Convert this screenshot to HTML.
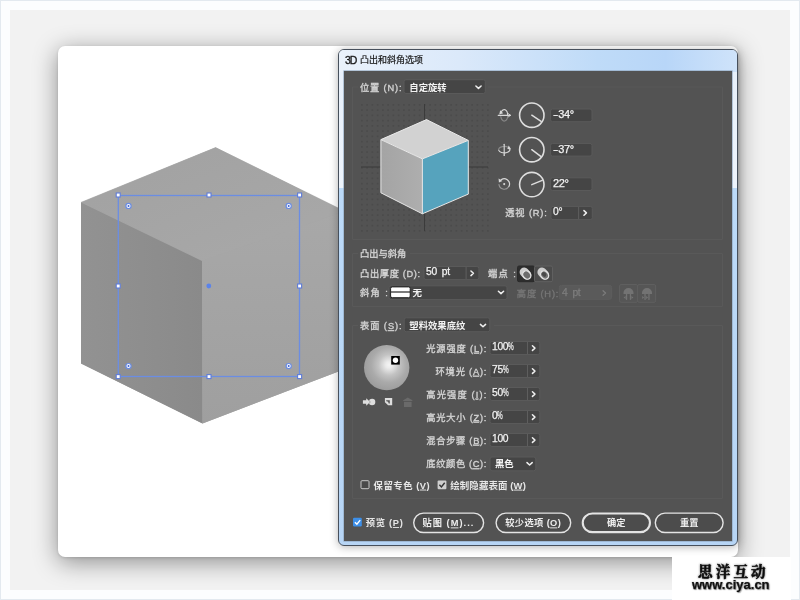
<!DOCTYPE html>
<html><head><meta charset="utf-8"><title>3D 凸出和斜角选项</title>
<style>
html,body{margin:0;padding:0}
body{width:800px;height:600px;position:relative;overflow:hidden;background:#f2f2f2;font-family:"Liberation Sans",sans-serif}
.b{position:absolute}
.t{position:absolute;color:transparent;white-space:nowrap;line-height:1.2;overflow:hidden;height:1.2em;font-family:"Liberation Sans",sans-serif}
.v i{display:inline-block;font-style:normal;transform:scaleX(.62);transform-origin:0 50%;letter-spacing:0}
.v b{font-weight:normal;display:inline-block;transform:scaleX(1.45);transform-origin:0 50%;margin-right:2px}
.v{-webkit-text-stroke:.25px;will-change:transform;position:absolute;white-space:nowrap;line-height:1;font-family:"Liberation Sans",sans-serif}
svg{position:absolute;left:0;top:0}
#frame{position:absolute;left:0;top:0;width:780px;height:580px;border:10px solid #fcfdfe;box-shadow:inset 0 0 0 0 #000}
#edge{position:absolute;left:0;top:0;width:798px;height:598px;border:1px solid #e3e9ef}
#card{position:absolute;left:58px;top:46px;width:680px;height:510.5px;background:#fff;border-radius:7px;box-shadow:0 5px 24px rgba(0,0,0,.42),0 1px 3px rgba(0,0,0,.12)}
#dlg{position:absolute;left:338px;top:48.5px;width:398px;height:495px;border:1px solid #47505c;border-radius:6px;background:linear-gradient(180deg,#e6effa 0,#eef4fc 137.5px,#bcdaf8 138.5px,#b7d5f5 100%);box-shadow:0 1px 8px rgba(0,0,0,.3)}
#tbar{position:absolute;left:0;top:0;width:398px;height:22px;border-radius:5px 5px 0 0;background:linear-gradient(90deg,#eaf2fb 0%,#dbe9fa 30%,#bfdbf8 65%,#b8d6f8 82%,#cfe3fa 100%)}
#panel{position:absolute;left:5.3px;top:21.6px;width:388px;height:469.6px;background:#535353;box-shadow:0 0 0 .6px #8fa6bf}
#wm{position:absolute;left:672px;top:557px;width:119px;height:43px;background:#fff}
.lbl text{font-family:"Liberation Sans","Noto Sans CJK SC",sans-serif}
</style></head><body>
<div id="frame"></div><div id="edge"></div>
<div id="card"></div>
<svg width="800" height="600" viewBox="0 0 800 600">
<defs>
<linearGradient id="bt" x1="0" y1="0" x2="1" y2="1"><stop offset="0" stop-color="#a1a1a1"/><stop offset="1" stop-color="#a9a9a9"/></linearGradient>
<linearGradient id="bl" x1="0" y1="0" x2="1" y2="0"><stop offset="0" stop-color="#929292"/><stop offset="1" stop-color="#8a8a8a"/></linearGradient>
<linearGradient id="br" x1="0" y1="0" x2="0" y2="1"><stop offset="0" stop-color="#a8a8a8"/><stop offset="1" stop-color="#9f9f9f"/></linearGradient>
</defs>
<polygon points="215.60,147.60 81.00,202.40 81.00,363.60 202.50,423.60 345.00,368.90 345.00,211.40" fill="#a5a5a5" />
<polygon points="215.60,147.60 81.00,202.40 202.00,261.00 345.00,211.40" fill="url(#bt)" stroke="#a6a6a6" stroke-width=".6"/>
<polygon points="81.00,202.40 202.00,261.00 202.50,423.60 81.00,363.60" fill="url(#bl)" />
<polygon points="202.00,261.00 345.00,211.40 345.00,368.90 202.50,423.60" fill="url(#br)" />
<rect x="118.3" y="195.5" width="181.2" height="181" fill="none" stroke="#6b8de3" stroke-width="1.3"/>
<rect x="116.2" y="193.0" width="4" height="4" fill="#fff" stroke="#5f7cd8" stroke-width="1.1"/>
<rect x="116.2" y="284.0" width="4" height="4" fill="#fff" stroke="#5f7cd8" stroke-width="1.1"/>
<rect x="116.2" y="374.6" width="4" height="4" fill="#fff" stroke="#5f7cd8" stroke-width="1.1"/>
<rect x="207.0" y="193.0" width="4" height="4" fill="#fff" stroke="#5f7cd8" stroke-width="1.1"/>
<circle cx="208.8" cy="286" r="2.4" fill="#5b83ea"/>
<rect x="207.0" y="374.6" width="4" height="4" fill="#fff" stroke="#5f7cd8" stroke-width="1.1"/>
<rect x="297.6" y="193.0" width="4" height="4" fill="#fff" stroke="#5f7cd8" stroke-width="1.1"/>
<rect x="297.6" y="284.0" width="4" height="4" fill="#fff" stroke="#5f7cd8" stroke-width="1.1"/>
<rect x="297.6" y="374.6" width="4" height="4" fill="#fff" stroke="#5f7cd8" stroke-width="1.1"/>
<circle cx="128.5" cy="205.9" r="2.6" fill="#fff" stroke="#6b8de3" stroke-width="1.2"/><circle cx="128.5" cy="205.9" r="1" fill="#3f63d6"/>
<circle cx="288.7" cy="205.9" r="2.6" fill="#fff" stroke="#6b8de3" stroke-width="1.2"/><circle cx="288.7" cy="205.9" r="1" fill="#3f63d6"/>
<circle cx="128.5" cy="366.1" r="2.6" fill="#fff" stroke="#6b8de3" stroke-width="1.2"/><circle cx="128.5" cy="366.1" r="1" fill="#3f63d6"/>
<circle cx="288.7" cy="366.1" r="2.6" fill="#fff" stroke="#6b8de3" stroke-width="1.2"/><circle cx="288.7" cy="366.1" r="1" fill="#3f63d6"/>
</svg>
<div id="dlg"><div id="tbar"></div><div id="panel"></div></div>
<div id="wm"></div>
<svg width="800" height="600" viewBox="0 0 800 600">
<defs>
<pattern id="dots" x="361" y="104" width="5.25" height="5.25" patternUnits="userSpaceOnUse"><rect x="0" y="0" width="1.7" height="1.7" rx=".5" fill="#4a4a4a"/></pattern>
<linearGradient id="cubeL" x1="0" y1="0" x2="1" y2="0"><stop offset="0" stop-color="#a4a4a4"/><stop offset="1" stop-color="#aeaeae"/></linearGradient>
<radialGradient id="sph" cx="0.55" cy="0.44" r="0.6"><stop offset="0" stop-color="#f4f4f4"/><stop offset=".12" stop-color="#ebebeb"/><stop offset=".38" stop-color="#c3c3c3"/><stop offset=".65" stop-color="#aaaaaa"/><stop offset="1" stop-color="#9a9a9a"/></radialGradient>
</defs>
<path d="M358.0 87.0 H352.5 V239.5 H722.5 V87.0 H488.0" fill="none" stroke="#595959" stroke-width="1"/>
<rect x="404.00" y="79.70" width="81.30" height="13.80" rx="2" fill="#454545" stroke="#5a5a5a" stroke-width="1"/>
<path d="M475.90 86.00 L478.50 88.40 L481.10 86.00" fill="none" stroke="#f0f0f0" stroke-width="1.5" stroke-linecap="round" stroke-linejoin="round"/>
<rect x="359" y="102" width="131" height="131" fill="url(#dots)"/>
<path d="M424.5 104 V231 M361 167 H488" stroke="#3b3b3b" stroke-width="1" fill="none"/>
<polygon points="426.50,119.60 380.90,139.60 422.40,158.90 468.30,140.40" fill="#d2d2d2" />
<polygon points="380.90,139.60 422.40,158.90 422.40,213.80 380.90,192.80" fill="url(#cubeL)" />
<polygon points="422.40,158.90 468.30,140.40 468.30,194.10 422.40,213.80" fill="#56a3bd" />
<path d="M426.50 119.60 L380.90 139.60 L380.90 192.80 L422.40 213.80 L468.30 194.10 L468.30 140.40 Z M380.90 139.60 L422.40 158.90 M422.40 158.90 L468.30 140.40 M422.40 158.90 L422.40 213.80" fill="none" stroke="#e9e9e9" stroke-width="1" stroke-linejoin="round"/>
<g fill="none" stroke="#d8d8d8" stroke-width="1.15" stroke-linecap="round"><path d="M498.2 115.3 H510.2"/><path d="M510.4 115.3 l-1.9 -1.5 M510.4 115.3 l-1.9 1.5" stroke-width="1"/><path d="M501.2 112.4 A3.5 5.8 0 0 1 507.7 115.4"/><path d="M507.7 115.6 A3.5 5.8 0 0 1 500.8 116.6" opacity=".4"/><path d="M499.2 114.6 L503.2 113.3 L500.2 110.3 Z" fill="#d8d8d8" stroke="none"/></g>
<g fill="none" stroke="#d8d8d8" stroke-width="1.15" stroke-linecap="round"><path d="M504.2 144.2 V154.8"/><circle cx="504.2" cy="155.2" r=".8" fill="#d8d8d8" stroke="none"/><path d="M498.8 150.4 A5.6 3.2 0 1 0 509.3 148.3"/><path d="M508.6 147.6 A5.6 3.2 0 0 0 498.7 149.6" opacity=".4"/><path d="M511.1 149.2 L507.3 149.1 L508.7 145.6 Z" fill="#d8d8d8" stroke="none"/></g>
<g fill="none" stroke="#d8d8d8" stroke-width="1.15" stroke-linecap="round"><path d="M500.4 180.3 A5.3 5.3 0 0 1 508.9 186.4"/><path d="M508.6 186.9 A5.3 5.3 0 0 1 499 184.6" opacity=".5"/><path d="M498.6 178.6 L498.9 182.6 L502.4 180.9 Z" fill="#d8d8d8" stroke="none"/><circle cx="504.2" cy="184.1" r="1.05" fill="#d8d8d8" stroke="none"/></g>
<circle cx="531.80" cy="115.20" r="12.2" fill="none" stroke="#dedede" stroke-width="1.6"/>
<path d="M531.80 115.20 L541.09 121.46" stroke="#dedede" stroke-width="1.5" stroke-linecap="round"/>
<circle cx="531.80" cy="149.70" r="12.2" fill="none" stroke="#dedede" stroke-width="1.6"/>
<path d="M531.80 149.70 L540.74 156.44" stroke="#dedede" stroke-width="1.5" stroke-linecap="round"/>
<circle cx="531.80" cy="184.60" r="12.2" fill="none" stroke="#dedede" stroke-width="1.6"/>
<path d="M531.80 184.60 L542.18 180.40" stroke="#dedede" stroke-width="1.5" stroke-linecap="round"/>
<rect x="550.60" y="109.00" width="41.40" height="12.70" rx="2" fill="#454545" stroke="#5a5a5a" stroke-width="1"/>
<rect x="550.60" y="143.40" width="41.40" height="12.70" rx="2" fill="#454545" stroke="#5a5a5a" stroke-width="1"/>
<rect x="550.60" y="177.80" width="41.40" height="12.70" rx="2" fill="#454545" stroke="#5a5a5a" stroke-width="1"/>
<rect x="551.00" y="206.40" width="41.30" height="13.20" rx="2" fill="#454545" stroke="#5a5a5a" stroke-width="1"/>
<path d="M578.60 206.90 V219.10" stroke="#5e5e5e" stroke-width="1"/>
<path d="M583.95 210.60 L586.45 212.90 L583.95 215.20" fill="none" stroke="#f0f0f0" stroke-width="1.5" stroke-linecap="round" stroke-linejoin="round"/>
<path d="M358.0 253.5 H352.5 V306.5 H722.5 V253.5 H410.0" fill="none" stroke="#595959" stroke-width="1"/>
<rect x="424.00" y="266.50" width="54.90" height="13.10" rx="2" fill="#454545" stroke="#5a5a5a" stroke-width="1"/>
<path d="M466.10 267.00 V279.10" stroke="#5e5e5e" stroke-width="1"/>
<path d="M470.95 271.00 L473.45 273.30 L470.95 275.60" fill="none" stroke="#f0f0f0" stroke-width="1.5" stroke-linecap="round" stroke-linejoin="round"/>
<rect x="517.5" y="266" width="17" height="15.7" rx="1.5" fill="#2d2d2d" stroke="#2a2a2a"/>
<rect x="534.5" y="266" width="18" height="15.7" rx="1.5" fill="#4b4b4b" stroke="#606060"/>
<g transform="translate(526.10 274.30)"><path d="M-1.9 -2.1 L0.6 0.6" stroke="#cdcdcd" stroke-width="9.2" stroke-linecap="round"/><ellipse cx="0.7" cy="0.7" rx="3.7" ry="4.5" transform="rotate(-42 0.7 0.7)" fill="#6c6c6c" stroke="#e4e4e4" stroke-width="1.3"/>
</g>
<g transform="translate(543.90 274.30)"><path d="M-1.9 -2.1 L0.6 0.6" stroke="#cdcdcd" stroke-width="9.2" stroke-linecap="round"/><ellipse cx="0.7" cy="0.7" rx="3.7" ry="4.5" transform="rotate(-42 0.7 0.7)" fill="#777" stroke="#e4e4e4" stroke-width="1.3"/>
<ellipse cx="0.2" cy="0.1" rx="2" ry="2.6" transform="rotate(-42 0.2 0.1)" fill="#4a4a4a"/>
</g>
<rect x="389.00" y="285.80" width="118.00" height="13.80" rx="2" fill="#454545" stroke="#5a5a5a" stroke-width="1"/>
<rect x="390.6" y="286.9" width="19.6" height="10.8" rx="1.6" fill="#fff" stroke="#222" stroke-width="1"/>
<path d="M391 292 H410" stroke="#111" stroke-width="1.1"/>
<path d="M498.40 291.20 L501.00 293.60 L503.60 291.20" fill="none" stroke="#f0f0f0" stroke-width="1.5" stroke-linecap="round" stroke-linejoin="round"/>
<rect x="559.30" y="285.40" width="52.30" height="13.90" rx="2" fill="#5a5a5a" stroke="#5d5d5d" stroke-width="1"/>
<path d="M603.05 290.70 L605.55 293.00 L603.05 295.30" fill="none" stroke="#7c7c7c" stroke-width="1.2" stroke-linecap="round" stroke-linejoin="round"/>
<rect x="619.6" y="284.5" width="18" height="17.8" rx="1.5" fill="#565656" stroke="#5f5f5f"/>
<rect x="637.6" y="284.5" width="18" height="17.8" rx="1.5" fill="#565656" stroke="#5f5f5f"/>
<g fill="#737373"><path d="M623.50 292.70 a5 4.6 0 0 1 10 0 v1.2 h-10z"/>
<rect x="625.90" y="293.90" width="1.3" height="6"/><rect x="629.80" y="293.90" width="1.3" height="6"/>
<path d="M625.60 296.00 l-2 1.5 l2 1.5z M631.40 296.00 l2 1.5 l-2 1.5z"/>
</g>
<g fill="#737373"><path d="M642.00 292.70 a5 4.6 0 0 1 10 0 v1.2 h-10z"/>
<rect x="644.40" y="293.90" width="1.3" height="6"/><rect x="648.30" y="293.90" width="1.3" height="6"/>
<path d="M642.20 296.00 l2 1.5 l-2 1.5z M646.10 296.00 l2 1.5 l-2 1.5z"/>
</g>
<path d="M358.0 325.5 H352.5 V498.5 H722.5 V325.5 H494.0" fill="none" stroke="#595959" stroke-width="1"/>
<rect x="404.20" y="317.80" width="85.60" height="13.90" rx="2" fill="#454545" stroke="#5a5a5a" stroke-width="1"/>
<path d="M480.40 324.40 L483.00 326.80 L485.60 324.40" fill="none" stroke="#f0f0f0" stroke-width="1.5" stroke-linecap="round" stroke-linejoin="round"/>
<circle cx="386.7" cy="367.6" r="22.7" fill="url(#sph)"/>
<rect x="391.2" y="356" width="8.6" height="8.6" fill="#000"/><circle cx="395.5" cy="360.3" r="2.7" fill="#fff"/>
<g fill="#dedede"><circle cx="372.1" cy="402" r="3.2"/><path d="M362.9 400.3 h3.3 v-2.1 l4 3.8 l-4 3.8 v-2.1 h-3.3z" stroke="#535353" stroke-width=".9" paint-order="stroke"/><path d="M384.9 398 h7.3 v7.2 h-4.1 l-3.2 -2.9z"/><path d="M386.2 400.2 h3.6 v3.2 h-1.1 a2.3 2.3 0 0 0 -2.5 -2.2z" fill="#535353"/></g>
<g fill="#6a6a6a"><path d="M403.2 400.2 l4.6 -2.8 l4.6 2.8 v0.8 h-9.2z"/><path d="M404 401.8 h7.6 v5.2 h-7.6z"/></g>
<rect x="490.00" y="341.50" width="49.80" height="13.00" rx="2" fill="#454545" stroke="#5a5a5a" stroke-width="1"/>
<path d="M527.50 342.00 V354.00" stroke="#5e5e5e" stroke-width="1"/>
<path d="M532.45 345.80 L534.95 348.10 L532.45 350.40" fill="none" stroke="#f0f0f0" stroke-width="1.5" stroke-linecap="round" stroke-linejoin="round"/>
<rect x="490.00" y="364.50" width="49.80" height="13.00" rx="2" fill="#454545" stroke="#5a5a5a" stroke-width="1"/>
<path d="M527.50 365.00 V377.00" stroke="#5e5e5e" stroke-width="1"/>
<path d="M532.45 368.80 L534.95 371.10 L532.45 373.40" fill="none" stroke="#f0f0f0" stroke-width="1.5" stroke-linecap="round" stroke-linejoin="round"/>
<rect x="490.00" y="387.50" width="49.80" height="13.00" rx="2" fill="#454545" stroke="#5a5a5a" stroke-width="1"/>
<path d="M527.50 388.00 V400.00" stroke="#5e5e5e" stroke-width="1"/>
<path d="M532.45 391.80 L534.95 394.10 L532.45 396.40" fill="none" stroke="#f0f0f0" stroke-width="1.5" stroke-linecap="round" stroke-linejoin="round"/>
<rect x="490.00" y="410.50" width="49.80" height="13.00" rx="2" fill="#454545" stroke="#5a5a5a" stroke-width="1"/>
<path d="M527.50 411.00 V423.00" stroke="#5e5e5e" stroke-width="1"/>
<path d="M532.45 414.80 L534.95 417.10 L532.45 419.40" fill="none" stroke="#f0f0f0" stroke-width="1.5" stroke-linecap="round" stroke-linejoin="round"/>
<rect x="490.00" y="433.50" width="49.80" height="13.00" rx="2" fill="#454545" stroke="#5a5a5a" stroke-width="1"/>
<path d="M527.50 434.00 V446.00" stroke="#5e5e5e" stroke-width="1"/>
<path d="M532.45 437.80 L534.95 440.10 L532.45 442.40" fill="none" stroke="#f0f0f0" stroke-width="1.5" stroke-linecap="round" stroke-linejoin="round"/>
<rect x="490.00" y="457.00" width="45.80" height="13.80" rx="2" fill="#454545" stroke="#5a5a5a" stroke-width="1"/>
<path d="M527.00 462.60 L529.60 465.00 L532.20 462.60" fill="none" stroke="#f0f0f0" stroke-width="1.5" stroke-linecap="round" stroke-linejoin="round"/>
<rect x="361" y="480.7" width="8" height="8" rx="1" fill="#4a4a4a" stroke="#c8c8c8" stroke-width="1"/>
<rect x="437.6" y="480.4" width="8.8" height="8.8" rx="1" fill="#cfcfcf"/><path d="M439.4 484.8 l2 2.1 l3.3 -4.2" fill="none" stroke="#333" stroke-width="1.4"/>
<rect x="353" y="517.7" width="8.8" height="8.8" rx="1.2" fill="#3d8fe8"/><path d="M354.9 522.2 l2 2.1 l3.3 -4.2" fill="none" stroke="#fff" stroke-width="1.4"/>
<rect x="413.70" y="513.10" width="69.90" height="19.40" rx="9.70" fill="#4c4c4c" stroke="#e4e4e4" stroke-width="1.4"/>
<rect x="496.10" y="513.10" width="74.60" height="19.40" rx="9.70" fill="#4c4c4c" stroke="#e4e4e4" stroke-width="1.4"/>
<rect x="582.75" y="513.45" width="67.20" height="18.70" rx="9.70" fill="#4c4c4c" stroke="#e4e4e4" stroke-width="2.1"/>
<rect x="655.30" y="513.10" width="67.80" height="19.40" rx="9.70" fill="#4c4c4c" stroke="#e4e4e4" stroke-width="1.4"/>
</svg>
<span class="t" style="left:360.0px;top:82.4px;font-size:9.25px;width:43.6px">位置 (N):</span>
<span class="t" style="left:409.3px;top:82.2px;font-size:9.35px;width:39.4px">自定旋转</span>
<span class="v" style="left:553.00px;top:109.00px;font-size:11px;color:#f2f2f2;font-weight:normal;letter-spacing:-0.4px;font-family:'Liberation Sans',sans-serif;"><b>-</b>34°</span>
<span class="v" style="left:553.00px;top:144.00px;font-size:11px;color:#f2f2f2;font-weight:normal;letter-spacing:-0.4px;font-family:'Liberation Sans',sans-serif;"><b>-</b>37°</span>
<span class="v" style="left:553.00px;top:178.00px;font-size:11px;color:#f2f2f2;font-weight:normal;letter-spacing:-0.4px;font-family:'Liberation Sans',sans-serif;">22°</span>
<span class="t" style="left:505.3px;top:207.4px;font-size:9.25px;width:43.6px">透视 (R):</span>
<span class="v" style="left:553.20px;top:207.00px;font-size:10.3px;color:#f2f2f2;font-weight:normal;letter-spacing:-0.35px;font-family:'Liberation Sans',sans-serif;">0°</span>
<span class="t" style="left:360.0px;top:248.1px;font-size:9.25px;width:48.2px">凸出与斜角</span>
<span class="t" style="left:360.0px;top:268.4px;font-size:9.25px;width:62.1px">凸出厚度 (D):</span>
<span class="v" style="left:426.00px;top:267.00px;font-size:10.3px;color:#f2f2f2;font-weight:normal;letter-spacing:-0.35px;font-family:'Liberation Sans',sans-serif;word-spacing:2.6px;">50 pt</span>
<span class="t" style="left:488.0px;top:268.4px;font-size:9.25px;width:29.8px">端点 :</span>
<span class="t" style="left:360.0px;top:287.4px;font-size:9.25px;width:29.8px">斜角 :</span>
<span class="t" style="left:412.4px;top:287.1px;font-size:9.50px;width:11.5px">无</span>
<span class="t" style="left:516.8px;top:287.8px;font-size:9.25px;width:43.6px">高度 (H):</span>
<span class="v" style="left:561.80px;top:288.00px;font-size:10.3px;color:#7e7e7e;font-weight:normal;letter-spacing:-0.35px;font-family:'Liberation Sans',sans-serif;word-spacing:2.6px;">4 pt</span>
<span class="t" style="left:360.0px;top:320.1px;font-size:9.25px;width:43.6px">表面 (S):</span>
<span class="t" style="left:409.3px;top:320.1px;font-size:9.35px;width:58.1px">塑料效果底纹</span>
<span class="t" style="left:426.3px;top:342.8px;font-size:9.25px;width:62.1px">光源强度 (L):</span>
<span class="v" style="left:492.40px;top:342.00px;font-size:10.3px;color:#f2f2f2;font-weight:normal;letter-spacing:-0.35px;font-family:'Liberation Sans',sans-serif;">100<i>%</i></span>
<span class="t" style="left:435.5px;top:365.8px;font-size:9.25px;width:52.9px">环境光 (A):</span>
<span class="v" style="left:492.40px;top:365.00px;font-size:10.3px;color:#f2f2f2;font-weight:normal;letter-spacing:-0.35px;font-family:'Liberation Sans',sans-serif;">75<i>%</i></span>
<span class="t" style="left:426.3px;top:388.8px;font-size:9.25px;width:62.1px">高光强度 (I):</span>
<span class="v" style="left:492.40px;top:388.00px;font-size:10.3px;color:#f2f2f2;font-weight:normal;letter-spacing:-0.35px;font-family:'Liberation Sans',sans-serif;">50<i>%</i></span>
<span class="t" style="left:426.3px;top:411.8px;font-size:9.25px;width:62.1px">高光大小 (Z):</span>
<span class="v" style="left:492.40px;top:411.00px;font-size:10.3px;color:#f2f2f2;font-weight:normal;letter-spacing:-0.35px;font-family:'Liberation Sans',sans-serif;">0<i>%</i></span>
<span class="t" style="left:426.3px;top:434.8px;font-size:9.25px;width:62.1px">混合步骤 (B):</span>
<span class="v" style="left:492.40px;top:434.00px;font-size:10.3px;color:#f2f2f2;font-weight:normal;letter-spacing:-0.35px;font-family:'Liberation Sans',sans-serif;">100</span>
<span class="t" style="left:426.3px;top:458.2px;font-size:9.25px;width:62.1px">底纹颜色 (C):</span>
<span class="t" style="left:495.0px;top:458.3px;font-size:9.35px;width:20.7px">黑色</span>
<span class="t" style="left:373.6px;top:479.5px;font-size:9.35px;width:58.1px">保留专色 (V)</span>
<span class="t" style="left:450.2px;top:479.4px;font-size:9.45px;width:77.6px">绘制隐藏表面 (W)</span>
<span class="t" style="left:365.8px;top:517.1px;font-size:9.25px;width:39.0px">预览 (P)</span>
<span class="t" style="left:422.5px;top:517.5px;font-size:9.25px;width:52.9px">贴图 (M)...</span>
<span class="t" style="left:505.2px;top:517.5px;font-size:9.25px;width:57.5px">较少选项 (O)</span>
<span class="t" style="left:607.1px;top:517.5px;font-size:9.25px;width:20.5px">确定</span>
<span class="t" style="left:680.0px;top:517.5px;font-size:9.25px;width:20.5px">重置</span>
<span class="t" style="left:360.0px;top:54.6px;font-size:9.00px;width:65.0px">凸出和斜角选项</span>
<span class="v" style="left:344.8px;top:55px;font-size:10.5px;color:#161616;letter-spacing:-1px;-webkit-text-stroke:.3px">3D</span>
<span class="t" style="left:698.0px;top:562.6px;font-size:14.60px;width:72.8px">思洋互动</span>
<span class="v" style="left:692.3px;top:577.6px;font-size:13px;font-weight:bold;color:#111;text-shadow:0 0 2px #999,1px 1px 1px #aaa">www.ciya.cn</span>
<svg class="lbl" width="800" height="600" viewBox="0 0 800 600" style="pointer-events:none">
<filter id="wsh" x="-10%" y="-30%" width="120%" height="160%"><feGaussianBlur stdDeviation="1"/></filter>
<text x="360" y="91.32" font-size="9.25" fill="#d2d2d2" stroke="#d2d2d2" stroke-width=".35" textLength="41.6">位置 (N):</text>
<text x="409.3" y="91.26" font-size="9.35" font-weight="bold" fill="#f2f2f2" textLength="37.4">自定旋转</text>
<text x="505.27" y="216.42" font-size="9.25" fill="#d2d2d2" stroke="#d2d2d2" stroke-width=".35" textLength="41.6">透视 (R):</text>
<text x="360" y="257.12" font-size="9.25" fill="#d2d2d2" stroke="#d2d2d2" stroke-width=".35" textLength="46.25">凸出与斜角</text>
<text x="360" y="277.42" font-size="9.25" fill="#d2d2d2" stroke="#d2d2d2" stroke-width=".35" textLength="60.1">凸出厚度 (D):</text>
<text x="488" y="277.42" font-size="9.25" fill="#d2d2d2" stroke="#d2d2d2" stroke-width=".35" textLength="27.75">端点 :</text>
<text x="360" y="296.42" font-size="9.25" fill="#d2d2d2" stroke="#d2d2d2" stroke-width=".35" textLength="27.75">斜角 :</text>
<text x="412.4" y="296.31" font-size="9.5" font-weight="bold" fill="#f2f2f2">无</text>
<text x="516.8" y="296.72" font-size="9.25" fill="#767676" stroke="#767676" stroke-width=".35" textLength="41.6">高度 (H):</text>
<text x="360" y="329.12" font-size="9.25" fill="#d2d2d2" stroke="#d2d2d2" stroke-width=".35" textLength="41.6">表面 (<tspan text-decoration="underline">S</tspan>):</text>
<text x="409.3" y="329.16" font-size="9.35" font-weight="bold" fill="#f2f2f2" textLength="56.1">塑料效果底纹</text>
<text x="426.27" y="351.82" font-size="9.25" fill="#d2d2d2" stroke="#d2d2d2" stroke-width=".35" textLength="60.1">光源强度 (<tspan text-decoration="underline">L</tspan>):</text>
<text x="435.52" y="374.82" font-size="9.25" fill="#d2d2d2" stroke="#d2d2d2" stroke-width=".35" textLength="50.9">环境光 (<tspan text-decoration="underline">A</tspan>):</text>
<text x="426.27" y="397.82" font-size="9.25" fill="#d2d2d2" stroke="#d2d2d2" stroke-width=".35" textLength="60.1">高光强度 (<tspan text-decoration="underline">I</tspan>):</text>
<text x="426.27" y="420.82" font-size="9.25" fill="#d2d2d2" stroke="#d2d2d2" stroke-width=".35" textLength="60.1">高光大小 (<tspan text-decoration="underline">Z</tspan>):</text>
<text x="426.27" y="443.82" font-size="9.25" fill="#d2d2d2" stroke="#d2d2d2" stroke-width=".35" textLength="60.1">混合步骤 (<tspan text-decoration="underline">B</tspan>):</text>
<text x="426.27" y="467.22" font-size="9.25" fill="#d2d2d2" stroke="#d2d2d2" stroke-width=".35" textLength="60.1">底纹颜色 (<tspan text-decoration="underline">C</tspan>):</text>
<text x="495" y="467.36" font-size="9.35" font-weight="bold" fill="#f2f2f2" textLength="18.7">黑色</text>
<text x="373.6" y="488.56" font-size="9.35" font-weight="bold" fill="#e6e6e6" textLength="56.1">保留专色 (<tspan text-decoration="underline">V</tspan>)</text>
<text x="450.2" y="488.6" font-size="9.45" font-weight="bold" fill="#e6e6e6" textLength="75.6">绘制隐藏表面 (<tspan text-decoration="underline">W</tspan>)</text>
<text x="365.8" y="526.02" font-size="9.25" font-weight="bold" fill="#e6e6e6" textLength="37">预览 (<tspan text-decoration="underline">P</tspan>)</text>
<text x="422.46" y="526.42" font-size="9.25" font-weight="bold" fill="#ededed" textLength="50.9">贴图 (<tspan text-decoration="underline">M</tspan>)...</text>
<text x="505.25" y="526.42" font-size="9.25" font-weight="bold" fill="#ededed" textLength="55.5">较少选项 (<tspan text-decoration="underline">O</tspan>)</text>
<text x="607.1" y="526.42" font-size="9.25" font-weight="bold" fill="#ededed" textLength="18.5">确定</text>
<text x="679.95" y="526.42" font-size="9.25" font-weight="bold" fill="#ededed" textLength="18.5">重置</text>
<text x="360" y="63.33" font-size="9" fill="#161616" stroke="#161616" stroke-width=".2" textLength="63">凸出和斜角选项</text>
<text x="698" y="576.8" font-size="14.6" font-weight="bold" fill="#0c0c0c" stroke="#0c0c0c" stroke-width=".5" textLength="67.7" style="font-family:'Liberation Serif','Noto Serif CJK SC',serif;filter:drop-shadow(0 0 .9px rgba(0,0,0,.55))">思洋互动</text>
</svg>
</body></html>
